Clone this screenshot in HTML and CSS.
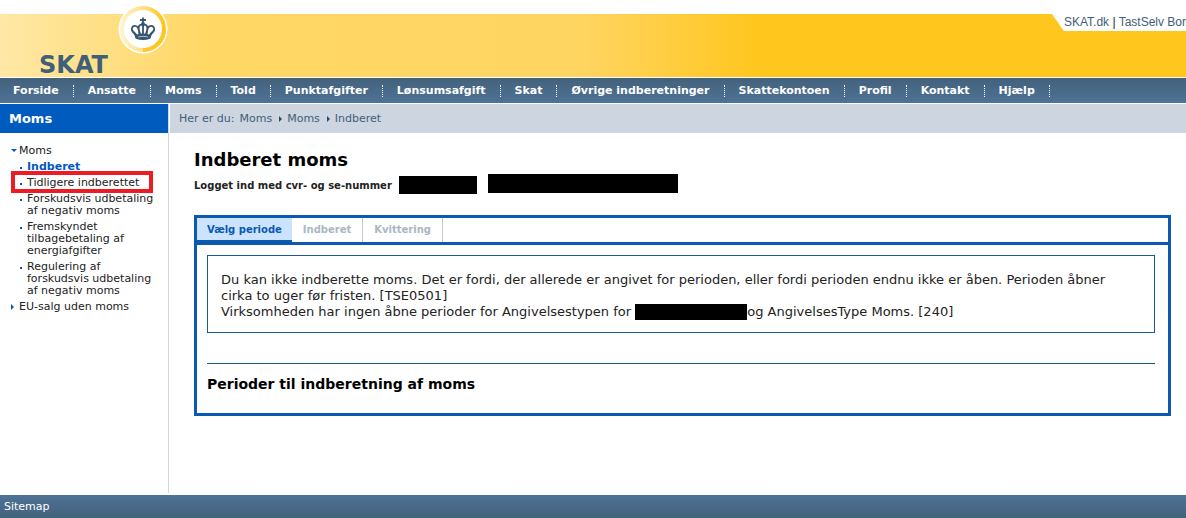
FILE: index.html
```html
<!DOCTYPE html>
<html lang="da">
<head>
<meta charset="utf-8">
<title>SKAT - Indberet moms</title>
<link rel="stylesheet" href="styles.css">
</head>
<body>
<header class="header">
  <div class="band">
    <a class="logo" href="#">SKAT</a>
    <svg class="crown" viewBox="0 0 50 50" aria-hidden="true">
      <defs>
        <linearGradient id="ring" x1="0" y1="0" x2="1" y2="0">
          <stop offset="0" stop-color="#fff3d0"/>
          <stop offset=".5" stop-color="#ffdf80"/>
          <stop offset="1" stop-color="#ffc51c"/>
        </linearGradient>
      </defs>
      <circle cx="25" cy="25" r="24.500" fill="#fff"/>
      <circle cx="25" cy="25" r="21" fill="none" stroke="url(#ring)" stroke-width="4"/>
      <path d="M46 25A21 21 0 0 1 25 46" fill="none" stroke="#fdc62a" stroke-width="4"/>
      <g fill="none" stroke="#35556f" stroke-width="1.800">
        <path d="M18 31Q12 26 14.500 23Q17 20.500 20 23.500Q21 26 21.500 31M22.500 31Q19 23 22 21Q24 20 25 22Q26 20 28 21Q31 23 27.500 31M32 31Q38 26 35.500 23Q33 20.500 30 23.500Q29 26 28.500 31"/>
        <path d="M25 13.500V31M22 16H28"/>
      </g>
      <path d="M15 26L19 30.500Q25 28.500 31 30.500L35 26L32.500 34.500Q25 37.500 17.500 34.500Z" fill="#35556f"/>
      <circle cx="25" cy="19.800" r="1.900" fill="#35556f"/>
      <path d="M20 33Q25 31.500 30 33" fill="none" stroke="#d5dde5" stroke-width=".8"/>
    </svg>
    <div class="toplinks"><a href="#">SKAT.dk</a> | <a href="#">TastSelv Bor</a></div>
  </div>
</header>
<nav class="nav">
  <a href="#">Forside</a><a href="#">Ansatte</a><a href="#">Moms</a><a href="#">Told</a><a href="#">Punktafgifter</a><a href="#">Lønsumsafgift</a><a href="#">Skat</a><a href="#">Øvrige indberetninger</a><a href="#">Skattekontoen</a><a href="#">Profil</a><a href="#">Kontakt</a><a href="#">Hjælp</a>
</nav>
<div class="columns">
  <aside class="sidebar">
    <h2 class="side-title">Moms</h2>
    <ul class="menu">
      <li class="open"><a href="#">Moms</a>
        <ul class="submenu">
          <li><a class="current" href="#">Indberet</a></li>
          <li class="marked"><a href="#">Tidligere indberettet</a></li>
          <li><a href="#">Forskudsvis udbetaling af negativ moms</a></li>
          <li><a href="#">Fremskyndet tilbagebetaling af energiafgifter</a></li>
          <li><a href="#">Regulering af forskudsvis udbetaling af negativ moms</a></li>
        </ul>
      </li>
      <li class="closed"><a href="#">EU-salg uden moms</a></li>
    </ul>
  </aside>
  <div class="page">
    <div class="crumbs"><span>Her er du:</span><a href="#">Moms</a><i class="arrow"></i><a href="#">Moms</a><i class="arrow"></i><a href="#">Indberet</a></div>
    <main class="main">
      <h1>Indberet moms</h1>
      <div class="login"><span>Logget ind med cvr- og se-nummer</span><span class="hidden-id"></span><span class="hidden-id name"></span></div>
      <section class="panel">
        <div class="tabs"><button class="tab active">Vælg periode</button><button class="tab">Indberet</button><button class="tab">Kvittering</button></div>
        <div class="content">
          <div class="message">
            <p>Du kan ikke indberette moms. Det er fordi, der allerede er angivet for perioden, eller fordi perioden endnu ikke er åben. Perioden åbner cirka to uger før fristen. [TSE0501]</p>
            <p>Virksomheden har ingen åbne perioder for Angivelsestypen for <span class="hidden-text"></span>og AngivelsesType Moms. [240]</p>
          </div>
          <h2 class="periods">Perioder til indberetning af moms</h2>
        </div>
      </section>
    </main>
  </div>
</div>
<footer class="footer"><a href="#">Sitemap</a></footer>
</body>
</html>
```
FILE: styles.css
```css
*, *::before, *::after { box-sizing: border-box; }
body {
  margin: 0;
  min-height: 100vh;
  display: flex;
  flex-direction: column;
  background: #fff;
  color: #222;
  font-family: Verdana, "DejaVu Sans", sans-serif;
  font-size: 11px;
}
a { color: inherit; text-decoration: none; }
h1, h2, p, ul { margin: 0; padding: 0; }
ul { list-style: none; }

.header { padding: 14px 0 1px; }
.band {
  position: relative;
  display: flex;
  justify-content: space-between;
  align-items: flex-start;
  height: 63px;
  background: linear-gradient(90deg, #ffe8a6 0, #ffd764 210px, #ffd562 580px, #ffc61e 760px);
}
.logo {
  align-self: flex-end;
  padding-left: 39px;
  color: #3f6078;
  font-size: 24px;
  line-height: 24px;
  font-weight: bold;
}
.crown { position: absolute; left: 118px; top: -10px; width: 50px; height: 50px; }
.toplinks {
  padding: 0 0 0 12px;
  background: #fff;
  clip-path: polygon(0 0, 100% 0, 100% 100%, 12px 100%);
  color: #222;
  font: 12px/17px "Liberation Sans", Arial, sans-serif;
  white-space: nowrap;
}
.toplinks a { color: #3f6078; }

.nav {
  display: flex;
  align-items: center;
  height: 25px;
  background: linear-gradient(#42617b, #4f7396);
  color: #fff;
  font-weight: bold;
  white-space: nowrap;
}
.nav a { padding: 0 14px; line-height: 12px; border-right: 1px dotted #fff; }
.nav a:first-child { padding-left: 13px; }

.columns { flex: 1; display: flex; padding: 1px 0 2px; }
.sidebar { flex: none; width: 169px; border-right: 1px solid #d3d8de; }
.side-title {
  padding-left: 9px;
  background: #005bbf;
  color: #fff;
  font-size: 13px;
  line-height: 29px;
}
.menu { padding: 12px 8px 0 11px; font-size: 11px; line-height: 12px; }
.menu > li { position: relative; padding: 0 0 0 8px; }
.menu > li::before { content: ""; position: absolute; left: 0; top: 4px; border: 3px solid transparent; }
.menu > .open::before { border-top-color: #005bbf; }
.menu > .closed::before { top: 3px; border-left-color: #005bbf; }
.submenu { padding: 4px 0; }
.submenu li { position: relative; padding: 0 0 0 8px; margin-bottom: 4px; }
.submenu li:last-child { margin-bottom: 0; }
.submenu li::before { content: ""; position: absolute; left: 1px; top: 6px; width: 2px; height: 2px; background: #005bbf; }
.submenu .marked::after {
  content: "";
  position: absolute;
  inset: -6px auto -4px -8px;
  width: 142px;
  border: 4px solid #ed1c24;
}
.current { color: #005bbf; font-weight: bold; }

.page { flex: 1; min-width: 0; }
.crumbs {
  display: flex;
  align-items: center;
  gap: 5px;
  height: 29px;
  margin-left: 1px;
  padding-left: 9px;
  background: #cdd5e1;
  color: #3f6078;
}
.arrow { margin: 0 0 0 2px; border: 3px solid transparent; border-left-color: #2b4a63; border-right-width: 0; }
.main { padding: 15px 15px 20px 25px; }
h1 { color: #000; font-size: 18px; line-height: 24px; }
.login { display: flex; align-items: center; height: 22px; margin-top: 2px; font-size: 10px; font-weight: bold; }
.hidden-id { width: 78px; height: 18px; margin-left: 7px; background: #000; }
.hidden-id.name { align-self: flex-start; width: 190px; height: 19px; margin-left: 11px; }
.panel { margin-top: 19px; border: 3px solid #0b59b0; }
.tabs { display: flex; height: 27px; border-bottom: 3px solid #0b59b0; }
.tab {
  padding: 0 11px;
  border: 0;
  border-right: 1px solid #c3ccd5;
  background: #fff;
  color: #a9b7c4;
  font: bold 10px/20px Verdana, "DejaVu Sans", sans-serif;
}
.tab.active { padding: 2px 10px 0; border-right: 0; border-bottom: 2px solid #0b59b0; background: #cce3ff; color: #0b59b0; }
.content { padding: 10px 13px 17px 10px; }
.message {
  padding: 16px 32px 12px 13px;
  border: 1px solid #1b5a90;
  font-size: 13px;
  line-height: 16px;
}
.hidden-text { display: inline-block; width: 112px; height: 16px; background: #000; vertical-align: top; }
.periods { margin-top: 30px; padding: 12px 0 4px; border-top: 1px solid #1b5a80; color: #000; font-size: 14px; line-height: 16px; }

.footer {
  padding: 1px 0 0 4px;
  background: linear-gradient(#4f7396, #42617b);
  color: #fff;
  line-height: 22px;
}
```
